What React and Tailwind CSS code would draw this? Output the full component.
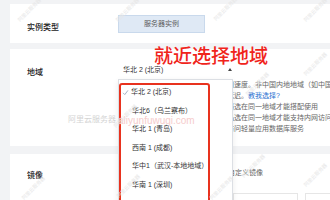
import React from 'react';

const REGIONS = [
  { name: '华北 2 (北京)', selected: true },
  { name: '华北6（乌兰察布）' },
  { name: '华北 1 (青岛)' },
  { name: '西南 1 (成都)' },
  { name: '华中1（武汉-本地地域）' },
  { name: '华南 1 (深圳)' },
];

const STAMPS = [
  [14, 6], [112, 6], [210, 5], [300, 6], [110, 112], [242, 80],
  [300, 60], [18, 184], [113, 182], [206, 184], [300, 171], [238, 162],
];

const App = () => {
  return (
    <div className="relative h-[200px] w-[330px] overflow-hidden bg-[#f2f3f5] pl-[10px] pt-[4px] font-['Liberation_Sans','Noto_Sans_CJK_SC',sans-serif] text-[#333]">
      {/* 实例类型 */}
      <div className="flex h-[39px] bg-white">
        <div className="w-[108px] shrink-0 pl-[17px] pt-[18px] text-[8px] leading-[11px] font-medium text-[#222]">实例类型</div>
        <div className="mt-[11px] flex h-[18px] w-[87px] shrink-0 items-center justify-center border border-[#c9d9ec] bg-[#dfe9f5] text-[7px] text-[#5a5a5a]">
          服务器实例
        </div>
      </div>

      {/* 地域 */}
      <div className="relative mt-[6px] flex h-[97px] bg-white">
        <div className="w-[108px] shrink-0 pl-[17px] pt-[18px] text-[8px] leading-[11px] font-medium text-[#222]">地域</div>
        <div className="flex w-[115px] shrink-0 items-start justify-between pl-[5px] pr-[1px] pt-[16px]">
          <span className="text-[7px] leading-[10px] text-[#333]">华北 2 (北京)</span>
          <span className="mt-[3px] h-0 w-0 border-x-[2.5px] border-b-[3px] border-x-transparent border-b-[#444]" />
        </div>
        <div className="ml-[-6px] whitespace-nowrap pt-[30px] text-[7px] leading-[11px] text-[#666]">
          <div>问速度。非中国内地地域（如中国香港）</div>
          <div>
            延迟。<span className="text-[#1f6fd0]">教我选择?</span>
          </div>
          <div>器选在同一地域才能搭配使用</div>
          <div>品选在同一地域才能支持内网访问</div>
          <div>访问轻量应用数据库服务</div>
        </div>

        {/* dropdown list */}
        <div className="absolute left-[108px] top-[30px] z-10 h-[140px] w-[115px] border border-[#dcdfe4] bg-white pt-[3px] shadow-[0_2px_6px_rgba(0,0,0,0.08)]">
          {REGIONS.map((r) => (
            <div key={r.name} className="flex h-[18.5px] items-center whitespace-nowrap text-[7px] text-[#333]">
              {r.selected ? (
                <>
                  <svg width="7" height="7" viewBox="0 0 10 10" className="ml-[3px] mr-[2px]">
                    <path d="M1.5 5.5 L4 8 L8.5 2" fill="none" stroke="#a3b1c6" strokeWidth="1.4" />
                  </svg>
                  <span>{r.name}</span>
                </>
              ) : (
                <span className="pl-[13px]">{r.name}</span>
              )}
            </div>
          ))}
        </div>
      </div>

      {/* 镜像 */}
      <div className="mt-[8px] flex h-[60px] bg-white">
        <div className="w-[108px] shrink-0 pl-[17px] pt-[16px] text-[8px] leading-[11px] font-medium text-[#222]">镜像</div>
        <div className="ml-[110px] shrink-0 pt-[14px]">
          <div className="whitespace-nowrap text-[7px] leading-[10px] text-[#666]">自定义镜像</div>
          <div className="ml-[5px] mt-[15px] flex gap-[7px]">
            <div className="h-[30px] w-[65px] border border-[#e6e6e6]" />
            <div className="h-[30px] w-[60px] border border-[#e6e6e6]" />
          </div>
        </div>
      </div>

      {/* annotation */}
      <div className="absolute left-[154px] top-[45px] z-20 whitespace-nowrap font-['Noto_Sans_CJK_SC',sans-serif] text-[19px] leading-[19px] font-medium text-[#f0241b]">
        就近选择地域
      </div>
      <div className="absolute left-[119px] top-[83px] z-20 h-[130px] w-[91px] rounded-[3px] border-2 border-[#e8321e]" />

      {/* watermarks */}
      <div className="pointer-events-none absolute left-[68px] top-[113px] z-30 whitespace-nowrap font-['Noto_Sans_CJK_SC',sans-serif] text-[8px] text-[#d4d4d4]">
        阿里云服务器
      </div>
      <div className="pointer-events-none absolute left-[118px] top-[113px] z-30 whitespace-nowrap text-[10px] text-[#f6cccc]">
        aliyunfuwuqi.com
      </div>
      {STAMPS.map(([x, y]) => (
        <div
          key={`${x}-${y}`}
          className="pointer-events-none absolute z-30 -rotate-45 whitespace-nowrap font-['Noto_Sans_CJK_SC',sans-serif] text-[5px] text-[#e6e6e6]"
          style={{ left: x, top: y }}
        >
          阿里云服务器
        </div>
      ))}
    </div>
  );
};

export default App;
